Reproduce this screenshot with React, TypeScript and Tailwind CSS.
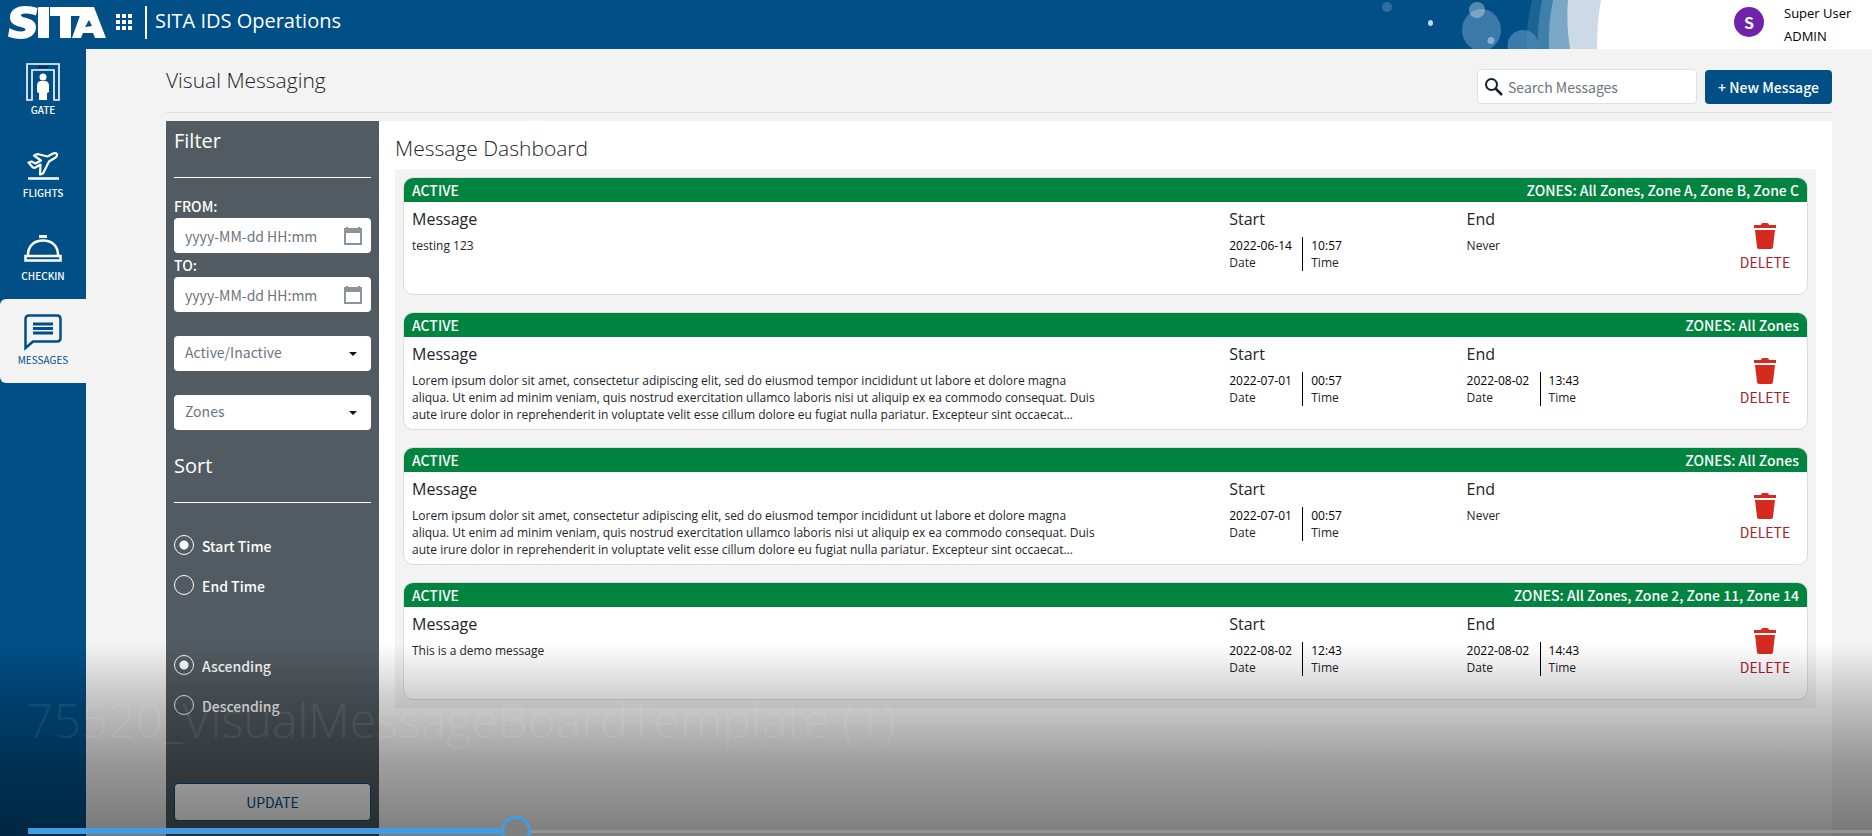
import { useState } from "react";

type Message = {
  id: number;
  zones: string;
  text: string;
  start: [string, string];
  end: [string, string] | null;
};

const LOREM =
  "Lorem ipsum dolor sit amet, consectetur adipiscing elit, sed do eiusmod tempor incididunt ut labore et dolore magna aliqua. Ut enim ad minim veniam, quis nostrud exercitation ullamco laboris nisi ut aliquip ex ea commodo consequat. Duis aute irure dolor in reprehenderit in voluptate velit esse cillum dolore eu fugiat nulla pariatur. Excepteur sint occaecat...";

const MESSAGES: Message[] = [
  { id: 1, zones: "All Zones, Zone A, Zone B, Zone C", text: "testing 123", start: ["2022-06-14", "10:57"], end: null },
  { id: 2, zones: "All Zones", text: LOREM, start: ["2022-07-01", "00:57"], end: ["2022-08-02", "13:43"] },
  { id: 3, zones: "All Zones", text: LOREM, start: ["2022-07-01", "00:57"], end: null },
  { id: 4, zones: "All Zones, Zone 2, Zone 11, Zone 14", text: "This is a demo message", start: ["2022-08-02", "12:43"], end: ["2022-08-02", "14:43"] },
];

function Logo() {
  return (
    <svg viewBox="0 0 98 33" className="h-[33px] w-[98px]" fill="#fff" role="img" aria-label="SITA">
      <path d="M28 9.500C24 8 20 7.500 17 7.500c-3 0-4 .8-4 1.800 0 3.500 15 1.500 15 12C28 29 21 33 13 33 8 33 3.500 32 0 30.500L1.500 22C5 24 9 25.500 13 25.500c3 0 4.500-.8 4.500-2 0-3.500-15.500-1.500-15.500-12C2 4 8.500 0 17 0c4.500 0 9 .8 12.500 2z" />
      <path d="M30 1h11v31H30z" />
      <path d="M42 1h34l-4 9h-9v22H52V10H42z" />
      <path fillRule="evenodd" d="M75 1h11l12 31H87l-2-5H75l-2 5H64zM81 14l-4 7 7-1z" />
    </svg>
  );
}

function HeaderArt() {
  return (
    <svg viewBox="0 0 222 49" className="h-[49px] w-[222px] shrink-0" aria-hidden="true">
      <circle cx="7" cy="7" r="5" fill="#2f6f9f" />
      <ellipse cx="50.500" cy="23" rx="2.500" ry="3" fill="#b9d9f0" />
      <path d="M147 49q-1-26 5-49h70v49z" fill="#1c6496" />
      <path d="M158 49q-1-26 4-49h60v49z" fill="#3f7fac" />
      <path d="M169 49q-1-26 4-49h49v49z" fill="#7ba7c5" />
      <path d="M190 49q-4-26-2-49h34v49z" fill="#cbdae6" />
      <path d="M217 49q0-28 4-49h1v49z" fill="#fff" />
      <ellipse cx="101.500" cy="30" rx="19.500" ry="21" fill="#3c79a8" />
      <circle cx="97" cy="10" r="8" fill="#fff" fillOpacity=".33" />
      <circle cx="111" cy="40.500" r="3.500" fill="#86b0cf" />
      <circle cx="143" cy="45.500" r="15.500" fill="#5b92bb" fillOpacity=".65" />
    </svg>
  );
}

function GateIcon() {
  return (
    <svg viewBox="0 0 34 38" className="h-[38px] w-[34px]" aria-hidden="true">
      <path d="M1 37V1h32v36h-5V7H6v30z" fill="none" stroke="#fff" strokeWidth="1.600" />
      <path d="M12 4h10" stroke="#0b2c4a" strokeWidth="2" />
      <circle cx="17" cy="14" r="3.500" fill="#fff" />
      <path d="M14 18h6q3 1 3 5v6l-2 1v7h-8v-7l-2-1v-6q0-4 3-5z" fill="#fff" />
    </svg>
  );
}

function FlightIcon() {
  return (
    <svg viewBox="0 0 32 28" className="h-[28px] w-[32px]" fill="none" stroke="#fff" aria-hidden="true">
      <path d="M1 26.500h31" strokeWidth="2.500" />
      <path
        d="M1.500 10.500l3-1 4 2 5.500-3-7-5 3.500-1.500 10 2.500 5.500-3q3-1 4 .5.500 2-1.500 3.500l-6.500 4-6 12-3 1 .5-10-5 3q-2 1-3.500-1z"
        strokeWidth="2.200"
        strokeLinejoin="round"
      />
    </svg>
  );
}

function CheckinIcon() {
  return (
    <svg viewBox="0 0 38 27" className="h-[27px] w-[38px]" fill="none" stroke="#fff" aria-hidden="true">
      <path d="M15 1.500h8" strokeWidth="3" />
      <path d="M4 20C4 11 10 5.500 19 5.500S34 11 34 20" strokeWidth="2.500" />
      <path d="M1.500 21h35v4.500h-35z" strokeWidth="2.500" />
    </svg>
  );
}

function MessagesIcon() {
  return (
    <svg viewBox="0 0 38 38" className="h-[38px] w-[38px]" fill="none" stroke="#004f87" aria-hidden="true">
      <path d="M1.500 34V5q0-3.500 3.500-3.500h28q3.500 0 3.500 3.500v19q0 3.500-3.500 3.500H9z" strokeWidth="2.500" />
      <path d="M9 10h20M9 14.500h20M9 19h20" strokeWidth="2.800" />
    </svg>
  );
}

function CalendarIcon() {
  return (
    <svg viewBox="0 0 18 18" className="h-[18px] w-[18px]" aria-hidden="true">
      <path fill="#8b9499" fillRule="evenodd" d="M2 0h2v1h10V0h2v1h2v17H0V1h2zM2 6v10h14V6z" />
    </svg>
  );
}

function TrashIcon() {
  return (
    <svg viewBox="0 0 22 26" className="h-[26px] w-[22px]" fill="#d52b1e" aria-hidden="true">
      <path d="M7 2q0-2 2-2h4q2 0 2 2h7v3H0V2zM1 7h20l-2 17q0 2-2 2H5q-2 0-2-2z" />
    </svg>
  );
}

const NAV = [
  { label: "GATE", icon: <GateIcon />, pad: "pt-[14px]" },
  { label: "FLIGHTS", icon: <FlightIcon />, pad: "pt-[20px]" },
  { label: "CHECKIN", icon: <CheckinIcon />, pad: "pt-[20px]" },
];

const SANS = "font-['Noto_Sans_CJK_SC',sans-serif]";

function DateField({ id, label }: { id: string; label: string }) {
  return (
    <div>
      <label htmlFor={id} className="block h-[24px] text-[14px] leading-[24px] font-medium text-white">
        {label}
      </label>
      <div className="flex h-[35px] items-center rounded-[4px] bg-white pr-[9px] pl-[11px]">
        <input
          id={id}
          type="text"
          placeholder="yyyy-MM-dd HH:mm"
          className="min-w-0 flex-1 bg-transparent text-[14px] leading-[24px] outline-none placeholder:text-[#6c757d]"
        />
        <CalendarIcon />
      </div>
    </div>
  );
}

function SelectField({ label }: { label: string }) {
  return (
    <div className="relative">
      <select
        aria-label={label}
        className="block h-[35px] w-full appearance-none rounded-[4px] bg-white px-[11px] pb-[3px] text-[14px] text-[#6c757d]"
      >
        <option>{label}</option>
      </select>
      <svg viewBox="0 0 8 4" className="pointer-events-none absolute top-[16px] right-[14px] h-[4px] w-[8px]" aria-hidden="true">
        <path d="M0 0h8L4 4z" fill="#111" />
      </svg>
    </div>
  );
}

function Radio({ name, label, checked }: { name: string; label: string; checked?: boolean }) {
  return (
    <label className="flex h-[40px] items-start gap-[8px] text-[14px] leading-[22px] font-medium text-white">
      <input
        type="radio"
        name={name}
        defaultChecked={checked}
        className="h-[20px] w-[20px] appearance-none rounded-full border border-white checked:bg-[radial-gradient(circle,#fff_4px,transparent_5px)]"
      />
      {label}
    </label>
  );
}

function DateTime({ title, value }: { title: string; value: [string, string] | null }) {
  return (
    <div>
      <h3 className="text-[16px] leading-[24px]">{title}</h3>
      {value ? (
        <div className="mt-[6px] flex text-[12px] leading-[17px]">
          <div className="w-[74px] border-r border-black">
            <div className="text-black">{value[0]}</div>
            <div>Date</div>
          </div>
          <div className="pl-[8px]">
            <div className="text-black">{value[1]}</div>
            <div>Time</div>
          </div>
        </div>
      ) : (
        <div className="mt-[6px] text-[12px] leading-[17px]">Never</div>
      )}
    </div>
  );
}

function MessageCard({ message }: { message: Message }) {
  return (
    <article className="flex h-[118px] flex-col overflow-hidden rounded-[10px] border border-[#dcdcdc] bg-white text-[#212529]">
      <div className={`flex h-[24px] shrink-0 items-center justify-between bg-[#00843f] px-[8px] text-[14px] leading-[24px] font-medium text-white ${SANS}`}>
        <span>ACTIVE</span>
        <span>ZONES: {message.zones}</span>
      </div>
      <div className="grid flex-1 grid-cols-[824fr_237fr_256fr_84px] pt-[5px]">
        <div className="pl-[8px]">
          <h3 className="text-[16px] leading-[24px]">Message</h3>
          <p className="mt-[6px] max-w-[688px] text-[12px] leading-[17px]">{message.text}</p>
        </div>
        <DateTime title="Start" value={message.start} />
        <DateTime title="End" value={message.end} />
        <div className="flex justify-center pt-[16px]">
          <button type="button" className={`flex flex-col items-center gap-[2px] self-start text-[14px] leading-[22px] text-[#a81e2b] ${SANS}`}>
            <TrashIcon />
            DELETE
          </button>
        </div>
      </div>
    </article>
  );
}

export default function App() {
  const [progress, setProgress] = useState(261);

  return (
    <div className="relative flex min-h-screen flex-col overflow-hidden bg-[#f3f3f3] font-['Open_Sans',sans-serif]">
      <header className="flex h-[49px] items-stretch bg-[#004f87]">
        <div className="flex flex-1 items-start pt-[6px] pl-[8px]">
          <Logo />
          <button type="button" aria-label="Applications" className="mt-[8px] ml-[10px]">
            <svg viewBox="0 0 16 16" className="h-[16px] w-[16px]" fill="#fff" aria-hidden="true">
              <path d="M0 0h4v4H0zM6 0h4v4H6zM12 0h4v4h-4zM0 6h4v4H0zM6 6h4v4H6zM12 6h4v4h-4zM0 12h4v4H0zM6 12h4v4H6zM12 12h4v4h-4z" />
            </svg>
          </button>
          <span className="ml-[13px] h-[33px] w-[2px] bg-white" />
          <h1 className="ml-[8px] text-[20px] leading-[30px] text-white">SITA IDS Operations</h1>
        </div>
        <HeaderArt />
        <div className="flex w-[270px] bg-white pl-[132px]">
          <span className={`mt-[7px] flex h-[30px] w-[30px] items-center justify-center rounded-full bg-[#7122ad] text-[16px] leading-[30px] font-bold text-white ${SANS}`}>S</span>
          <div className="ml-[20px] pt-[2px] text-[13px] leading-[23px] text-black">
            <div>Super User</div>
            <div>ADMIN</div>
          </div>
        </div>
      </header>

      <div className="flex flex-1">
        <nav className={`flex w-[86px] shrink-0 flex-col bg-[#004f87] text-[10px] leading-[14px] font-medium text-white ${SANS}`}>
          {NAV.map((item) => (
            <a key={item.label} href="#" className={`flex h-[83px] flex-col items-center justify-between pb-[15px] ${item.pad}`}>
              {item.icon}
              {item.label}
            </a>
          ))}
          <a href="#" className="mt-px flex h-[84px] flex-col items-center gap-[1px] rounded-l-[6px] bg-[#f3f3f3] pt-[15px] font-normal text-[#004f87]">
            <MessagesIcon />
            MESSAGES
          </a>
        </nav>

        <main className="flex flex-1 flex-col pr-[40px] pl-[80px]">
          <div className="flex h-[64px] items-start border-b border-[#dee2e6]">
            <h2 className="mt-[16px] flex-1 text-[21px] leading-[30px] font-light text-[#212529]">Visual Messaging</h2>
            <label className="mt-[20px] flex h-[35px] w-[220px] items-center gap-[5px] rounded-[4px] border border-[#dee2e6] bg-white pl-[7px]">
              <svg viewBox="0 0 18 18" className="h-[18px] w-[18px] shrink-0" fill="none" stroke="#16202a" aria-hidden="true">
                <circle cx="6.500" cy="6.500" r="5.500" strokeWidth="2" />
                <path d="M10.500 10.500L17 17" strokeWidth="2.500" />
              </svg>
              <input
                type="text"
                aria-label="Search Messages"
                placeholder="Search Messages"
                className={`min-w-0 flex-1 bg-transparent text-[14px] leading-[24px] outline-none placeholder:text-[#6c757d] ${SANS}`}
              />
            </label>
            <button type="button" className={`mt-[21px] ml-[8px] h-[34px] w-[127px] rounded-[4px] bg-[#004f87] text-[14px] leading-[24px] font-medium text-white ${SANS}`}>
              + New Message
            </button>
          </div>

          <div className="mt-[8px] flex flex-1">
            <aside className={`flex w-[213px] shrink-0 flex-col bg-[#525b61] px-[8px] ${SANS}`}>
              <h2 className="h-[57px] border-b border-white pt-[5px] font-['Open_Sans',sans-serif] text-[20px] leading-[30px] text-white">Filter</h2>
              <div className="mt-[16px]">
                <DateField id="from" label="FROM:" />
                <DateField id="to" label="TO:" />
              </div>
              <div className="mt-[24px] flex flex-col gap-[24px]">
                <SelectField label="Active/Inactive" />
                <SelectField label="Zones" />
              </div>
              <h2 className="mt-[16px] h-[57px] border-b border-white pt-[5px] font-['Open_Sans',sans-serif] text-[20px] leading-[30px] text-white">Sort</h2>
              <div className="mt-[32px]">
                <Radio name="field" label="Start Time" checked />
                <Radio name="field" label="End Time" />
              </div>
              <div className="mt-[40px]">
                <Radio name="order" label="Ascending" checked />
                <Radio name="order" label="Descending" />
              </div>
              <button type="button" className="mt-[48px] h-[38px] shrink-0 rounded-[4px] border border-[#004f87] bg-white text-[14px] leading-[24px] text-[#004f87]">
                UPDATE
              </button>
            </aside>

            <section className="flex-1 bg-white px-[16px] pt-[12px]">
              <h2 className="h-[36px] text-[21px] leading-[30px] font-light text-[#212529]">Message Dashboard</h2>
              <div className="flex flex-col gap-[17px] bg-[#f3f3f3] p-[8px]">
                {MESSAGES.map((m) => (
                  <MessageCard key={m.id} message={m} />
                ))}
              </div>
            </section>
          </div>
        </main>
      </div>

      <div className="pointer-events-none absolute inset-x-0 bottom-0 h-[193px] overflow-hidden bg-[linear-gradient(to_bottom,rgba(0,0,0,0)_0%,rgba(0,0,0,0.2)_30%,rgba(0,0,0,0.37)_60%,rgba(0,0,0,0.51)_100%)]">
        <p className="mt-[42px] ml-[26px] text-[48px] leading-[70px] font-light whitespace-nowrap text-white/7">
          75520_VisualMessageBoardTemplate (1)
        </p>
        <input
          type="range"
          aria-label="Playback position"
          min={0}
          max={1000}
          value={progress}
          onChange={(e) => setProgress(Number(e.target.value))}
          style={{ backgroundSize: `${progress / 10}% 6px, 100% 3px` }}
          className="pointer-events-auto absolute right-0 -bottom-[10px] left-[28px] h-[30px] appearance-none bg-[linear-gradient(#429ce3,#429ce3),linear-gradient(#929292,#929292)] bg-[position:left_center,left_center] bg-no-repeat [&::-webkit-slider-thumb]:h-[30px] [&::-webkit-slider-thumb]:w-[30px] [&::-webkit-slider-thumb]:appearance-none [&::-webkit-slider-thumb]:rounded-full [&::-webkit-slider-thumb]:border-[3px] [&::-webkit-slider-thumb]:border-[#429ce3] [&::-webkit-slider-thumb]:bg-[#7f7f7f]"
        />
      </div>
    </div>
  );
}
